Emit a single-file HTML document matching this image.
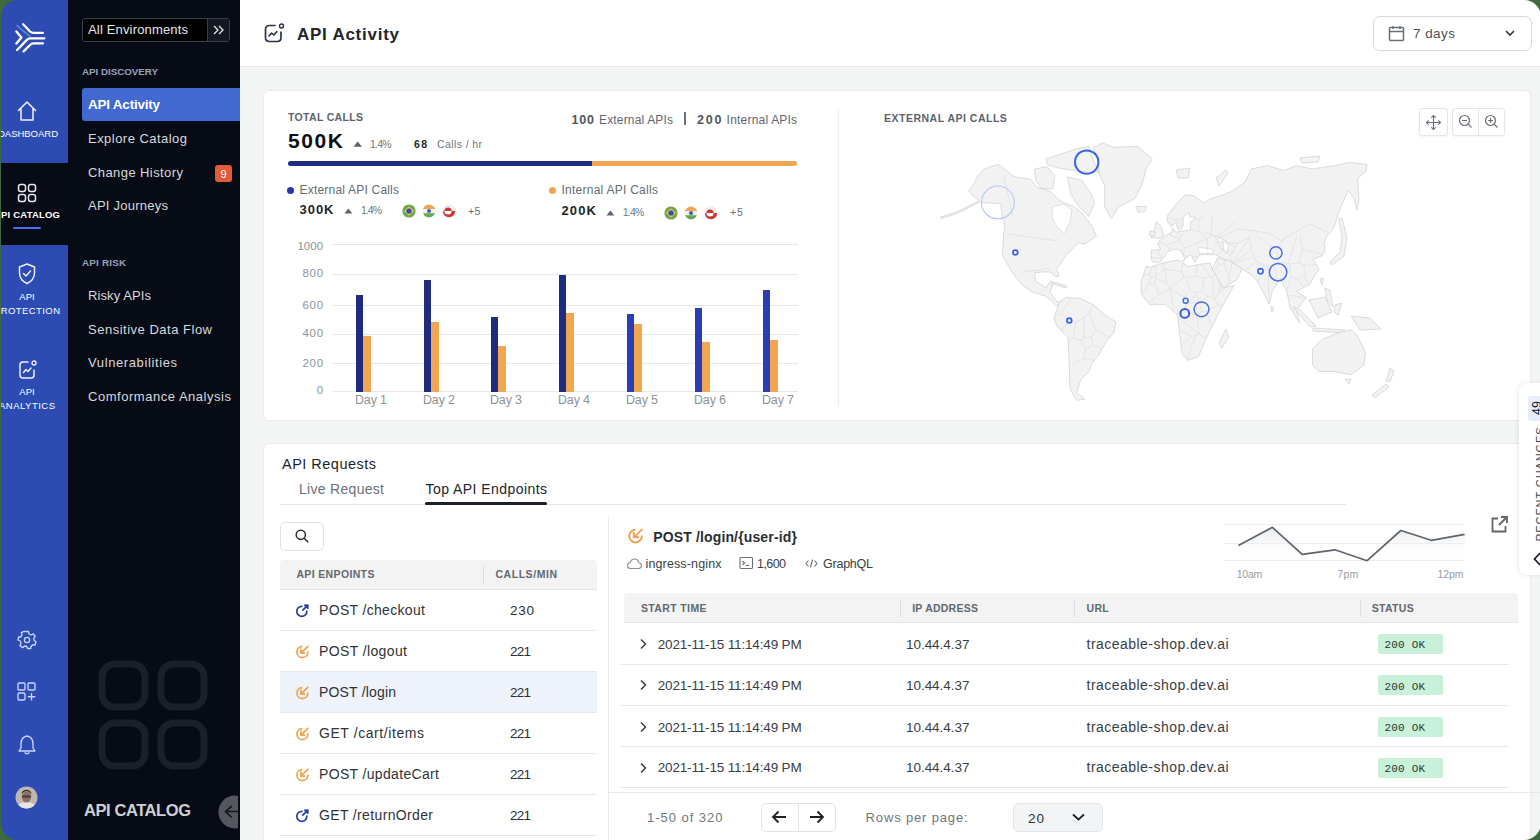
<!DOCTYPE html>
<html><head><meta charset="utf-8"><title>API Activity</title>
<style>
html,body{margin:0;padding:0}
body{width:1540px;height:840px;overflow:hidden;background:#3e6a40;position:relative;font-family:"Liberation Sans",sans-serif}
#app{position:absolute;left:0;top:0;width:1540px;height:840px;overflow:hidden;background:#f3f4f4}
.t{position:absolute;white-space:nowrap;line-height:1}
.r{position:absolute;box-sizing:border-box}
.s{position:absolute;overflow:visible}
</style></head><body><div id="app">
<div class="r" style="left:240px;top:0px;width:1300px;height:66px;background:#fff"></div>
<div class="r" style="left:240px;top:66px;width:1300px;height:1px;background:#e6e8ea"></div>
<div class="r" style="left:0px;top:0px;width:68px;height:840px;background:#2c4cb4"></div>
<div class="r" style="left:0px;top:163px;width:68px;height:82px;background:#070b15"></div>
<svg class="s" style="left:14px;top:22px;" width="32" height="32" viewBox="0 0 32 32"><g fill="none" stroke="#fff" stroke-width="2.3" stroke-linecap="round" stroke-linejoin="round">
<path d="M3.1 3.7 L16 14.4" stroke="#7fa4f5" stroke-width="2" opacity=".55"/>
<path d="M9.2 2.3 L16 9.5 Q17.4 10.9 19.5 10.9 L28.9 10.9"/>
<path d="M2.4 9.4 L7.4 15.5 L2.4 21.6"/>
<path d="M3.1 28 L13.1 17.6 Q14.3 16.3 16.5 16.3 L30.3 16.3"/>
<path d="M9.6 29.4 L16 23 Q17.4 21.4 19.5 21.4 L28.9 21.4"/>
</g></svg>
<svg class="s" style="left:17px;top:100px;" width="20" height="22" viewBox="0 0 20 22"><path d="M1.5 10.5 L10 2 L18.5 10.5 M4 8.5 V20 H16 V8.5" fill="none" stroke="#eef1fa" stroke-width="1.5" stroke-linejoin="round" stroke-linecap="round"/></svg>
<div class="t" style="left:-2.00px;top:129.00px;font-size:9.5px;color:#fff;font-weight:400;letter-spacing:-0.022px;">DASHBOARD</div>
<svg class="s" style="left:17px;top:183px;" width="21" height="20" viewBox="0 0 21 20"><g fill="none" stroke="#e8e8ee" stroke-width="1.5"><rect x="1.5" y="1.5" width="7" height="7" rx="2.2"/><rect x="11.5" y="1.5" width="7" height="7" rx="2.2"/><rect x="1.5" y="11.5" width="7" height="7" rx="2.2"/><rect x="11.5" y="11.5" width="7" height="7" rx="2.2"/></g></svg>
<div class="t" style="left:-6.00px;top:210.00px;font-size:9.5px;color:#fff;font-weight:700;letter-spacing:0.197px;">API CATALOG</div>
<div class="r" style="left:13px;top:227px;width:28px;height:2px;background:#4a6cf0;border-radius:1px"></div>
<svg class="s" style="left:17px;top:262px;" width="20" height="23" viewBox="0 0 20 23"><path d="M10 2 L17.5 5 V11 Q17.5 18 10 21.5 Q2.5 18 2.5 11 V5 Z" fill="none" stroke="#eef1fa" stroke-width="1.45" stroke-linejoin="round"/><path d="M6.5 11.5 L9 14 L13.5 9" fill="none" stroke="#eef1fa" stroke-width="1.45" stroke-linecap="round" stroke-linejoin="round"/></svg>
<div class="t" style="left:19.34px;top:292.00px;font-size:9.5px;color:#fff;font-weight:400;">API</div>
<div class="t" style="left:-6.00px;top:306.00px;font-size:9.5px;color:#fff;font-weight:400;letter-spacing:0.413px;">PROTECTION</div>
<svg class="s" style="left:17px;top:359px;" width="21" height="21" viewBox="0 0 21 21"><path d="M11 3 H6 Q3 3 3 6 V16 Q3 19 6 19 H14 Q17 19 17 16 V11" fill="none" stroke="#eef1fa" stroke-width="1.45" stroke-linecap="round"/><circle cx="17" cy="4" r="2" fill="none" stroke="#eef1fa" stroke-width="1.3"/><path d="M6.5 13.5 L9 10.5 L11 12.5 L14 9" fill="none" stroke="#eef1fa" stroke-width="1.4" stroke-linecap="round" stroke-linejoin="round"/></svg>
<div class="t" style="left:19.34px;top:387.00px;font-size:9.5px;color:#fff;font-weight:400;">API</div>
<div class="t" style="left:-1.00px;top:401.00px;font-size:9.5px;color:#fff;font-weight:400;letter-spacing:0.489px;">ANALYTICS</div>
<svg class="s" style="left:17px;top:630px;" width="20" height="20" viewBox="0 0 20 20"><g fill="none" stroke="#c9d4f7" stroke-width="1.35"><path d="M8.5 1.5 H11.5 L12 4 L14 5 L16.3 3.9 L18.2 6.2 L16.8 8.3 L17.2 10.5 L19 12 L18 15 L15.6 14.8 L14 16.5 L13.8 18.5 H10.5 L9.8 16.5 L7.6 16 L5.6 17.6 L3 15.6 L4 13.3 L3.4 11 L1 10 L1.6 7 L4 7 L5 4.8 L4.3 2.6 L7 1.3 Z" stroke-linejoin="round"/><circle cx="10" cy="10" r="2.6"/></g></svg>
<svg class="s" style="left:17px;top:682px;" width="20" height="20" viewBox="0 0 20 20"><g fill="none" stroke="#c9d4f7" stroke-width="1.35"><rect x="1" y="1" width="7" height="7" rx="1.2"/><rect x="11" y="1" width="7" height="7" rx="1.2"/><rect x="1" y="11" width="7" height="7" rx="1.2"/><path d="M14.5 11 V18.5 M10.8 14.7 H18.3"/></g></svg>
<svg class="s" style="left:17px;top:734px;" width="20" height="22" viewBox="0 0 20 22"><path d="M10 2 Q4 3 4 10 V14 L2 17 H18 L16 14 V10 Q16 3 10 2 Z M7.5 18.5 Q10 21 12.5 18.5" fill="none" stroke="#c9d4f7" stroke-width="1.35" stroke-linejoin="round"/></svg>
<svg class="s" style="left:15px;top:786px;" width="23" height="23" viewBox="0 0 23 23"><defs><clipPath id="av"><circle cx="11.5" cy="11.5" r="11"/></clipPath></defs>
<circle cx="11.5" cy="11.5" r="11" fill="#bfb6b0"/>
<g clip-path="url(#av)"><ellipse cx="11.5" cy="22" rx="10" ry="6" fill="#e9e4df"/><ellipse cx="11.5" cy="11" rx="4.6" ry="5.6" fill="#8a6f62"/><path d="M6.5 8 Q11.5 2 16.5 8 L16 6 Q11.5 1.5 7 6 Z" fill="#2b2523"/><rect x="7" y="9.5" width="9" height="2" fill="#2e2a2a" opacity=".7"/></g></svg>
<div class="r" style="left:68px;top:0px;width:172px;height:840px;background:#070b15"></div>
<div class="r" style="left:82px;top:18px;width:148px;height:24px;background:#000;border:1px solid #3a3f4a;border-radius:3px"></div>
<div class="r" style="left:207px;top:19px;width:1px;height:22px;background:#3a3f4a"></div>
<div class="r" style="left:208px;top:19px;width:21px;height:22px;background:#141820"></div>
<div class="t" style="left:88.00px;top:23.00px;font-size:13px;color:#e6e6e6;font-weight:400;letter-spacing:0.164px;">All Environments</div>
<svg class="s" style="left:211px;top:24px;" width="16" height="12" viewBox="0 0 16 12"><path d="M3 2 L7 6 L3 10 M8 2 L12 6 L8 10" fill="none" stroke="#e6e6e6" stroke-width="1.3"/></svg>
<div class="t" style="left:82.00px;top:67.00px;font-size:9.8px;color:#98a2bd;font-weight:700;letter-spacing:-0.035px;">API DISCOVERY</div>
<div class="r" style="left:82px;top:88px;width:158px;height:33px;background:#4169d1;border-radius:3px 0 0 3px"></div>
<div class="t" style="left:88.00px;top:98.00px;font-size:13.5px;color:#fff;font-weight:700;letter-spacing:-0.229px;">API Activity</div>
<div class="t" style="left:88.00px;top:132.00px;font-size:13px;color:#d9d9de;font-weight:400;letter-spacing:0.464px;">Explore Catalog</div>
<div class="t" style="left:88.00px;top:166.00px;font-size:13px;color:#d9d9de;font-weight:400;letter-spacing:0.415px;">Change History</div>
<div class="r" style="left:215px;top:165px;width:17px;height:17px;background:#e45b3a;border-radius:3px"></div>
<div class="t" style="left:220.44px;top:169.00px;font-size:11px;color:#fff;font-weight:400;">9</div>
<div class="t" style="left:88.00px;top:199.00px;font-size:13px;color:#d9d9de;font-weight:400;letter-spacing:0.244px;">API Journeys</div>
<div class="t" style="left:82.00px;top:258.00px;font-size:9.8px;color:#98a2bd;font-weight:700;letter-spacing:0.218px;">API RISK</div>
<div class="t" style="left:88.00px;top:289.00px;font-size:13px;color:#d9d9de;font-weight:400;letter-spacing:0.097px;">Risky APIs</div>
<div class="t" style="left:88.00px;top:323.00px;font-size:13px;color:#d9d9de;font-weight:400;letter-spacing:0.507px;">Sensitive Data Flow</div>
<div class="t" style="left:88.00px;top:356.00px;font-size:13px;color:#d9d9de;font-weight:400;letter-spacing:0.610px;">Vulnerabilities</div>
<div class="t" style="left:88.00px;top:390.00px;font-size:13px;color:#d9d9de;font-weight:400;letter-spacing:0.529px;">Comformance Analysis</div>
<svg class="s" style="left:98px;top:660px;" width="112" height="112" viewBox="0 0 112 112"><g fill="none" stroke="#1b1f28" stroke-width="7"><rect x="4" y="4" width="43" height="43" rx="13"/><rect x="63" y="4" width="43" height="43" rx="13"/><rect x="4" y="63" width="43" height="43" rx="13"/><rect x="63" y="63" width="43" height="43" rx="13"/></g></svg>
<div class="t" style="left:84.00px;top:802.00px;font-size:16.5px;color:#cfcfd3;font-weight:700;letter-spacing:-0.422px;">API CATALOG</div>
<div style="position:absolute;left:218px;top:795px;width:20px;height:34px;overflow:hidden">
<svg class="s" style="left:0px;top:0px;" width="34" height="34" viewBox="0 0 34 34"><circle cx="16.8" cy="17" r="16.4" fill="#54575e"/><path d="M20 16.5 H7.5 M13.8 11 L7.5 16.5 L13.8 22.5" fill="none" stroke="#15181e" stroke-width="1.7"/></svg>
</div>
<svg class="s" style="left:263px;top:23px;" width="22" height="21" viewBox="0 0 22 21"><path d="M12 2.5 H6.5 Q2.5 2.5 2.5 6.5 V14.5 Q2.5 18.5 6.5 18.5 H14 Q18 18.5 18 14.5 V9" fill="none" stroke="#2a3046" stroke-width="1.7" stroke-linecap="round"/><circle cx="18.5" cy="3" r="2" fill="none" stroke="#2a3046" stroke-width="1.4"/><path d="M6 13 L8.6 10 L10.8 12 L14 8.5" fill="none" stroke="#2a3046" stroke-width="1.6" stroke-linecap="round" stroke-linejoin="round"/></svg>
<div class="t" style="left:297.00px;top:26.00px;font-size:17px;color:#22252d;font-weight:700;letter-spacing:0.742px;">API Activity</div>
<div class="r" style="left:1373px;top:16px;width:159px;height:35px;background:#fff;border:1px solid #d5d8dc;border-radius:7px"></div>
<svg class="s" style="left:1388px;top:25px;" width="17" height="17" viewBox="0 0 17 17"><g fill="none" stroke="#6a6f78" stroke-width="1.5"><rect x="1.5" y="2.5" width="14" height="13" rx="1"/><path d="M1.5 6.5 H15.5 M5 1 V4 M12 1 V4"/></g></svg>
<div class="t" style="left:1413.00px;top:27.00px;font-size:13.5px;color:#4c5159;font-weight:400;letter-spacing:0.445px;">7 days</div>
<svg class="s" style="left:1504px;top:29px;" width="12" height="9" viewBox="0 0 12 9"><path d="M2 2 L6 6 L10 2" fill="none" stroke="#30343b" stroke-width="1.6"/></svg>
<div class="r" style="left:263px;top:90px;width:1268px;height:331px;background:#fff;border:1px solid #e9eaec;border-radius:6px"></div>
<div class="t" style="left:288.00px;top:112.00px;font-size:10.5px;color:#5c636c;font-weight:700;letter-spacing:0.325px;">TOTAL CALLS</div>
<div class="t" style="left:288.00px;top:130.00px;font-size:21px;color:#0d0f14;font-weight:700;letter-spacing:1.598px;">500K</div>
<svg class="s" style="left:353px;top:141px;" width="10" height="6" viewBox="0 0 10 6"><path d="M0.5 5.8 L4.7 0.5 L9 5.8 Z" fill="#5c636c"/></svg>
<div class="t" style="left:370.00px;top:139.00px;font-size:10.5px;color:#70767e;font-weight:400;letter-spacing:-0.811px;">1.4%</div>
<div class="t" style="left:414.00px;top:139.00px;font-size:10.5px;color:#262a31;font-weight:700;letter-spacing:1.320px;">68</div>
<div class="t" style="left:437.00px;top:139.00px;font-size:10.5px;color:#70767e;font-weight:400;letter-spacing:0.397px;">Calls / hr</div>
<div class="t" style="left:571.50px;top:114.00px;font-size:12.5px;color:#50565e;font-weight:700;letter-spacing:0.822px;">100</div>
<div class="t" style="left:599.00px;top:114.00px;font-size:12px;color:#5f656d;font-weight:400;letter-spacing:0.164px;">External APIs</div>
<div class="r" style="left:684px;top:112px;width:1.5px;height:13px;background:#6a7078"></div>
<div class="t" style="left:697.00px;top:114.00px;font-size:12.5px;color:#50565e;font-weight:700;letter-spacing:1.822px;">200</div>
<div class="t" style="left:726.60px;top:114.00px;font-size:12px;color:#5f656d;font-weight:400;letter-spacing:0.205px;">Internal APIs</div>
<div class="r" style="left:288px;top:161px;width:306px;height:4.5px;background:#1f2d80;border-radius:3px 0 0 3px"></div>
<div class="r" style="left:592px;top:161px;width:205px;height:4.5px;background:#f2a652;border-radius:0 3px 3px 0"></div>
<div class="r" style="left:287px;top:187px;width:7px;height:7px;background:#2336b0;border-radius:50%"></div>
<div class="t" style="left:299.50px;top:184.00px;font-size:12px;color:#666c74;font-weight:400;letter-spacing:0.203px;">External API Calls</div>
<div class="t" style="left:299.50px;top:203.00px;font-size:13px;color:#22262d;font-weight:700;letter-spacing:0.974px;">300K</div>
<svg class="s" style="left:344px;top:208px;" width="9" height="6" viewBox="0 0 9 6"><path d="M0.5 5.5 L4.3 0.5 L8.3 5.5 Z" fill="#5c636c"/></svg>
<div class="t" style="left:361.00px;top:205.00px;font-size:10.5px;color:#70767e;font-weight:400;letter-spacing:-0.978px;">1.4%</div>
<div class="r" style="left:549px;top:187px;width:7px;height:7px;background:#f2a652;border-radius:50%"></div>
<div class="t" style="left:561.40px;top:184.00px;font-size:12px;color:#666c74;font-weight:400;letter-spacing:0.262px;">Internal API Calls</div>
<div class="t" style="left:561.40px;top:204.00px;font-size:13px;color:#22262d;font-weight:700;letter-spacing:1.140px;">200K</div>
<svg class="s" style="left:606px;top:210px;" width="9" height="6" viewBox="0 0 9 6"><path d="M0.5 5.5 L4.3 0.5 L8.3 5.5 Z" fill="#5c636c"/></svg>
<div class="t" style="left:622.80px;top:207.00px;font-size:10.5px;color:#70767e;font-weight:400;letter-spacing:-0.811px;">1.4%</div>
<svg class="s" style="left:402px;top:203.5px;" width="14" height="14" viewBox="0 0 14 14"><circle cx="7" cy="7" r="6.6" fill="#6aa84f"/><path d="M7 2.2 L12.2 7 L7 11.8 L1.8 7 Z" fill="#f2b84b"/><circle cx="7" cy="7" r="2.6" fill="#2a4fbf"/></svg>
<svg class="s" style="left:422px;top:203.5px;" width="14" height="14" viewBox="0 0 14 14"><defs><clipPath id="in409"><circle cx="7" cy="7" r="6.4"/></clipPath></defs><g clip-path="url(#in409)"><rect width="14" height="5" fill="#f4a64e"/><rect y="5" width="14" height="4.2" fill="#f0f0f0"/><rect y="9.2" width="14" height="5" fill="#6aa84f"/></g><circle cx="7" cy="7" r="2" fill="#3a5fc8"/></svg>
<svg class="s" style="left:442px;top:203.5px;" width="14" height="14" viewBox="0 0 14 14"><circle cx="7" cy="7" r="6.8" fill="#eeeeee"/><defs><clipPath id="gl409"><circle cx="7" cy="7.3" r="6"/></clipPath></defs><g clip-path="url(#gl409)"><rect y="7" width="14" height="7" fill="#d0342c"/><circle cx="6" cy="7" r="3.6" fill="#d0342c"/><path d="M2.4 7 A3.6 3.6 0 0 0 9.6 7 Z" fill="#fff"/></g></svg>
<div class="t" style="left:468.00px;top:206.00px;font-size:10.7px;color:#6a7078;font-weight:400;letter-spacing:0.300px;">+5</div>
<svg class="s" style="left:664px;top:205.5px;" width="14" height="14" viewBox="0 0 14 14"><circle cx="7" cy="7" r="6.6" fill="#6aa84f"/><path d="M7 2.2 L12.2 7 L7 11.8 L1.8 7 Z" fill="#f2b84b"/><circle cx="7" cy="7" r="2.6" fill="#2a4fbf"/></svg>
<svg class="s" style="left:684px;top:205.5px;" width="14" height="14" viewBox="0 0 14 14"><defs><clipPath id="in671"><circle cx="7" cy="7" r="6.4"/></clipPath></defs><g clip-path="url(#in671)"><rect width="14" height="5" fill="#f4a64e"/><rect y="5" width="14" height="4.2" fill="#f0f0f0"/><rect y="9.2" width="14" height="5" fill="#6aa84f"/></g><circle cx="7" cy="7" r="2" fill="#3a5fc8"/></svg>
<svg class="s" style="left:704px;top:205.5px;" width="14" height="14" viewBox="0 0 14 14"><circle cx="7" cy="7" r="6.8" fill="#eeeeee"/><defs><clipPath id="gl671"><circle cx="7" cy="7.3" r="6"/></clipPath></defs><g clip-path="url(#gl671)"><rect y="7" width="14" height="7" fill="#d0342c"/><circle cx="6" cy="7" r="3.6" fill="#d0342c"/><path d="M2.4 7 A3.6 3.6 0 0 0 9.6 7 Z" fill="#fff"/></g></svg>
<div class="t" style="left:730.00px;top:207.00px;font-size:10.7px;color:#6a7078;font-weight:400;letter-spacing:0.800px;">+5</div>
<div class="r" style="left:332px;top:244px;width:466px;height:1px;background:#e7e8ea"></div>
<div class="t" style="left:297.40px;top:241.00px;font-size:11.5px;color:#8d9299;font-weight:400;letter-spacing:0.072px;">1000</div>
<div class="r" style="left:332px;top:274px;width:466px;height:1px;background:#e7e8ea"></div>
<div class="t" style="left:302.40px;top:268.00px;font-size:11.5px;color:#8d9299;font-weight:400;letter-spacing:0.806px;">800</div>
<div class="r" style="left:332px;top:305px;width:466px;height:1px;background:#e7e8ea"></div>
<div class="t" style="left:302.40px;top:300.00px;font-size:11.5px;color:#8d9299;font-weight:400;letter-spacing:0.806px;">600</div>
<div class="r" style="left:332px;top:334px;width:466px;height:1px;background:#e7e8ea"></div>
<div class="t" style="left:302.40px;top:328.00px;font-size:11.5px;color:#8d9299;font-weight:400;letter-spacing:0.806px;">400</div>
<div class="r" style="left:332px;top:363px;width:466px;height:1px;background:#e7e8ea"></div>
<div class="t" style="left:302.40px;top:358.00px;font-size:11.5px;color:#8d9299;font-weight:400;letter-spacing:0.806px;">200</div>
<div class="r" style="left:332px;top:391px;width:466px;height:1px;background:#e7e8ea"></div>
<div class="t" style="left:316.80px;top:385.00px;font-size:11.5px;color:#8d9299;font-weight:400;">0</div>
<div class="r" style="left:356px;top:295px;width:7px;height:96.5px;background:#1f2b7d"></div>
<div class="r" style="left:363px;top:336px;width:8px;height:55.5px;background:#f2a652"></div>
<div class="t" style="left:355.00px;top:394.00px;font-size:12.5px;color:#8d9299;font-weight:400;letter-spacing:-0.164px;">Day 1</div>
<div class="r" style="left:424px;top:280px;width:7px;height:111.5px;background:#1f2b7d"></div>
<div class="r" style="left:431px;top:322px;width:8px;height:69.5px;background:#f2a652"></div>
<div class="t" style="left:423.00px;top:394.00px;font-size:12.5px;color:#8d9299;font-weight:400;letter-spacing:-0.164px;">Day 2</div>
<div class="r" style="left:491px;top:317px;width:7px;height:74.5px;background:#1f2b7d"></div>
<div class="r" style="left:498px;top:346px;width:8px;height:45.5px;background:#f2a652"></div>
<div class="t" style="left:490.00px;top:394.00px;font-size:12.5px;color:#8d9299;font-weight:400;letter-spacing:-0.164px;">Day 3</div>
<div class="r" style="left:559px;top:275px;width:7px;height:116.5px;background:#1f2b7d"></div>
<div class="r" style="left:566px;top:313px;width:8px;height:78.5px;background:#f2a652"></div>
<div class="t" style="left:558.00px;top:394.00px;font-size:12.5px;color:#8d9299;font-weight:400;letter-spacing:-0.164px;">Day 4</div>
<div class="r" style="left:627px;top:314px;width:7px;height:77.5px;background:#2b3db0"></div>
<div class="r" style="left:634px;top:324px;width:8px;height:67.5px;background:#f2a652"></div>
<div class="t" style="left:626.00px;top:394.00px;font-size:12.5px;color:#8d9299;font-weight:400;letter-spacing:-0.164px;">Day 5</div>
<div class="r" style="left:695px;top:308px;width:7px;height:83.5px;background:#2b3db0"></div>
<div class="r" style="left:702px;top:342px;width:8px;height:49.5px;background:#f2a652"></div>
<div class="t" style="left:694.00px;top:394.00px;font-size:12.5px;color:#8d9299;font-weight:400;letter-spacing:-0.164px;">Day 6</div>
<div class="r" style="left:763px;top:290px;width:7px;height:101.5px;background:#2b3db0"></div>
<div class="r" style="left:770px;top:340px;width:8px;height:51.5px;background:#f2a652"></div>
<div class="t" style="left:762.00px;top:394.00px;font-size:12.5px;color:#8d9299;font-weight:400;letter-spacing:-0.164px;">Day 7</div>
<div class="r" style="left:838px;top:110px;width:1px;height:296px;background:#eceef0"></div>
<div class="t" style="left:884.00px;top:113.00px;font-size:10.5px;color:#5c636c;font-weight:700;letter-spacing:0.497px;">EXTERNAL API CALLS</div>
<div class="r" style="left:1419px;top:108px;width:29px;height:28px;background:#fff;border:1px solid #e4e6e9;border-radius:3px;box-shadow:0 1px 2px rgba(0,0,0,.05)"></div>
<div class="r" style="left:1452px;top:108px;width:53px;height:28px;background:#fff;border:1px solid #e4e6e9;border-radius:3px;box-shadow:0 1px 2px rgba(0,0,0,.05)"></div>
<div class="r" style="left:1478px;top:109px;width:1px;height:26px;background:#e4e6e9"></div>
<svg class="s" style="left:1425px;top:114px;" width="17" height="17" viewBox="0 0 17 17"><path d="M8.5 1.5 V15.5 M1.5 8.5 H15.5 M6.3 3.7 L8.5 1.5 L10.7 3.7 M6.3 13.3 L8.5 15.5 L10.7 13.3 M3.7 6.3 L1.5 8.5 L3.7 10.7 M13.3 6.3 L15.5 8.5 L13.3 10.7" fill="none" stroke="#6a7078" stroke-width="1.1"/></svg>
<svg class="s" style="left:1458px;top:114px;" width="15" height="15" viewBox="0 0 15 15"><circle cx="6.5" cy="6.5" r="5" fill="none" stroke="#6a7078" stroke-width="1.2"/><path d="M4 6.5 H9 M10.2 10.2 L13.5 13.5" fill="none" stroke="#6a7078" stroke-width="1.2"/></svg>
<svg class="s" style="left:1484px;top:114px;" width="15" height="15" viewBox="0 0 15 15"><circle cx="6.5" cy="6.5" r="5" fill="none" stroke="#6a7078" stroke-width="1.2"/><path d="M4 6.5 H9 M6.5 4 V9 M10.2 10.2 L13.5 13.5" fill="none" stroke="#6a7078" stroke-width="1.2"/></svg>
<svg class="s" style="left:930px;top:130px;" width="500" height="290" viewBox="0 0 500 290"><g fill="#f2f2f3" stroke="#d1d3d6" stroke-width="0.8" stroke-linejoin="round"><path d="M10.7 87.1 L26.4 82.1 L40.7 75.0 L49.3 70.7 L42.1 65.0 L38.6 61.4 L45.0 52.1 L46.4 47.9 L53.6 39.3 L67.9 34.3 L73.6 37.9 L83.6 46.4 L90.7 47.9 L100.0 49.1 L106.8 57.0 L120.4 61.6 L127.1 68.3 L133.9 72.9 L140.0 75.0 L145.0 77.4 L153.2 84.2 L158.8 92.0 L163.0 98.0 L166.4 106.0 L155.0 114.0 L148.5 112.8 L135.7 125.7 L129.0 136.0 L126.0 138.5 L129.2 146.0 L126.0 147.0 L120.0 142.0 L114.2 141.8 L104.6 142.8 L105.7 151.4 L116.4 157.8 L118.5 153.5 L123.0 154.0 L120.0 162.0 L127.1 172.0 L133.5 170.7 L127.0 176.0 L116.4 166.4 L102.5 162.1 L92.8 155.7 L82.0 142.0 L72.5 125.7 L73.6 104.3 L75.0 96.4 L72.1 85.0 L70.7 73.6 L60.0 73.0 L49.3 72.5 L40.0 77.0 L26.0 84.0 L11.0 88.5 Z"/><path d="M104.5 39.0 L117.0 36.7 L124.9 45.7 L122.6 59.3 L111.3 58.2 L105.7 50.2 Z"/><path d="M137.3 46.9 L152.0 50.2 L161.1 63.8 L164.5 72.9 L158.8 86.4 L148.6 76.3 L140.7 63.8 Z"/><path d="M115.8 28.8 L133.9 23.1 L147.5 18.6 L158.8 16.3 L163.3 31.0 L169.0 42.3 L155.0 42.0 L140.0 40.0 L128.0 38.0 L118.0 35.0 Z"/><path d="M163.0 18.0 L172.4 12.9 L183.7 17.4 L207.5 16.3 L222.2 28.8 L216.5 37.8 L212.0 54.8 L205.2 68.3 L188.2 77.4 L181.4 88.7 L174.7 77.4 L174.7 55.9 L169.0 43.5 L167.9 27.6 Z"/><path d="M129.2 172.8 L135.7 167.5 L150.7 168.5 L163.5 174.9 L176.3 185.7 L186.0 192.0 L183.8 202.8 L176.3 211.3 L167.8 226.3 L161.4 233.8 L159.2 241.3 L150.7 250.0 L146.4 262.7 L155.0 269.2 L146.4 270.2 L140.0 258.5 L138.9 228.5 L137.8 207.1 L127.1 196.4 L123.9 187.8 L127.1 179.2 Z"/><path d="M221.1 120.4 L221.1 129.0 L223.2 132.2 L229.7 132.2 L232.9 129.0 L237.2 122.5 L242.5 119.3 L247.9 119.3 L251.1 121.5 L255.4 129.0 L252.2 131.1 L256.0 128.0 L260.7 124.7 L265.0 132.2 L269.3 124.7 L285.4 124.7 L289.7 127.0 L298.6 130.5 L312.3 138.8 L321.4 145.0 L327.9 151.5 L339.1 174.0 L342.3 161.1 L350.4 148.3 L356.8 161.1 L360.0 177.2 L369.7 193.3 L366.5 180.4 L376.1 167.6 L366.5 161.1 L379.3 154.7 L389.0 138.6 L382.5 129.0 L392.2 125.8 L395.0 120.0 L394.0 113.0 L397.0 106.0 L404.0 98.0 L408.0 84.0 L414.0 70.0 L418.0 60.5 L424.0 68.0 L427.0 80.0 L429.0 70.0 L427.6 48.6 L436.0 41.4 L437.0 34.3 L417.9 32.5 L405.0 35.7 L382.5 38.9 L366.5 35.7 L353.6 40.5 L337.5 35.7 L321.4 38.9 L315.0 51.8 L302.2 61.4 L296.0 63.6 L290.7 65.7 L280.0 69.0 L273.6 73.2 L264.0 65.7 L255.4 64.6 L246.8 73.2 L237.2 86.1 L237.2 91.4 L241.4 96.8 L245.7 92.0 L248.0 99.0 L250.0 100.0 L253.2 95.7 L253.2 87.2 L258.6 83.0 L260.0 87.0 L266.0 87.2 L260.7 92.0 L260.7 100.0 L253.0 101.0 L245.7 102.2 L242.5 98.0 L242.0 102.0 L236.1 105.4 L230.7 109.7 L227.5 112.9 L230.7 119.3 Z"/><path d="M216.4 136.0 L211.0 152.5 L211.0 163.4 L219.2 174.4 L235.6 174.4 L247.9 185.3 L249.3 201.8 L252.0 223.7 L257.5 230.5 L268.5 226.4 L276.7 207.3 L282.2 196.3 L290.4 179.9 L304.1 155.2 L293.2 158.0 L282.2 138.8 L280.0 133.2 L269.3 134.3 L258.6 136.5 L247.9 130.0 L231.8 133.2 L220.0 137.5 Z"/><path d="M282.2 138.8 L293.2 158.0 L306.8 149.7 L312.3 138.8 L298.6 130.5 L287.7 127.8 Z"/><path d="M226.4 91.4 L230.7 95.7 L233.9 105.4 L229.7 108.6 L221.1 107.5 L224.3 100.0 Z"/><path d="M220.0 101.1 L225.4 102.2 L223.2 106.4 L219.5 105.4 Z"/><path d="M206.0 76.4 L216.8 76.4 L214.6 81.8 L208.2 82.3 Z"/><path d="M295.9 199.0 L298.6 207.3 L291.8 218.2 L289.0 212.7 Z"/><path d="M408.6 89.0 L412.0 88.0 L417.0 108.0 L414.0 126.0 L402.0 135.0 L400.0 132.0 L410.0 122.0 L412.0 108.0 Z"/><path d="M363.0 177.0 L370.0 180.0 L386.0 196.0 L380.0 197.0 Z"/><path d="M379.0 170.0 L395.0 167.0 L402.0 182.0 L388.0 188.0 Z"/><path d="M405.0 175.0 L412.0 173.0 L408.0 185.0 L404.0 182.0 Z"/><path d="M383.0 198.0 L415.0 200.0 L415.0 203.0 L383.0 201.0 Z"/><path d="M421.0 186.0 L440.0 188.0 L451.0 199.0 L430.0 200.0 Z"/><path d="M395.0 158.0 L400.0 160.0 L403.0 177.0 L397.0 170.0 Z"/><path d="M390.0 149.0 L393.0 148.0 L392.0 155.0 Z"/><path d="M341.0 176.0 L344.0 178.0 L342.0 182.0 Z"/><path d="M382.5 219.0 L392.2 209.4 L408.3 202.9 L421.1 199.7 L427.6 206.1 L435.6 222.2 L434.0 235.1 L421.1 244.7 L405.0 241.5 L389.0 241.5 L382.5 235.1 Z"/><path d="M415.0 249.0 L421.0 249.0 L419.0 254.0 Z"/><path d="M460.0 238.0 L464.0 241.0 L460.0 252.0 L456.0 251.0 Z"/><path d="M456.0 254.0 L459.0 257.0 L445.0 268.0 L442.0 265.0 Z"/><path d="M120.0 151.0 L137.0 156.0 L136.0 158.0 L121.0 153.0 Z"/><path d="M246.0 40.0 L260.0 38.0 L258.0 48.0 L248.0 48.0 Z"/><path d="M286.0 48.0 L296.0 40.0 L298.0 43.0 L289.0 56.0 Z"/><path d="M370.0 28.0 L390.0 26.0 L388.0 32.0 L372.0 33.0 Z"/></g><g fill="#fff" stroke="#d3d5d8" stroke-width="0.7"><path d="M122.6 77.0 L133.0 74.0 L142.0 80.0 L140.0 92.0 L134.3 103.6 L128.0 98.0 L122.0 88.0 Z"/><path d="M268.2 117.2 L283.2 119.3 L282.2 123.6 L269.3 123.6 Z"/><path d="M292.9 108.6 L298.2 115.0 L297.2 123.6 L294.0 121.5 Z"/></g><g fill="none" stroke="#d8dadd" stroke-width="0.6"><path d="M215.6 138.4 L219.4 137.3"/><path d="M213.6 144.6 L219.2 145.1"/><path d="M222.5 136.6 L219.2 145.1"/><path d="M260.0 160.0 L253.9 167.1"/><path d="M240.5 159.5 L253.9 167.1"/><path d="M239.8 158.6 L240.5 159.5"/><path d="M256.4 147.8 L260.0 160.0"/><path d="M256.4 147.8 L254.2 147.0"/><path d="M239.8 158.6 L254.2 147.0"/><path d="M251.0 215.3 L261.5 206.4"/><path d="M249.1 199.5 L261.5 206.4"/><path d="M239.8 158.6 L228.9 164.2"/><path d="M218.2 173.0 L228.9 164.2"/><path d="M240.5 159.5 L243.9 181.8"/><path d="M256.9 229.7 L265.7 205.5"/><path d="M261.5 206.4 L265.7 205.5"/><path d="M296.6 157.1 L288.7 162.3"/><path d="M290.1 152.7 L288.7 162.3"/><path d="M280.6 146.3 L274.2 148.5"/><path d="M280.6 146.3 L271.0 134.1"/><path d="M274.2 148.5 L265.9 146.0"/><path d="M267.0 134.8 L265.9 146.0"/><path d="M285.4 144.3 L282.7 145.9"/><path d="M282.7 145.9 L280.6 146.3"/><path d="M252.5 132.8 L252.0 141.8"/><path d="M256.4 147.8 L265.9 146.0"/><path d="M252.0 141.8 L254.2 147.0"/><path d="M260.0 160.0 L266.0 162.8"/><path d="M274.2 148.5 L271.9 160.4"/><path d="M271.9 160.4 L266.0 162.8"/><path d="M212.0 164.8 L218.7 154.5"/><path d="M228.9 164.2 L224.9 153.2"/><path d="M224.9 153.2 L218.7 154.5"/><path d="M219.2 145.1 L221.0 146.7"/><path d="M221.0 146.7 L218.7 154.5"/><path d="M236.6 153.1 L235.1 139.2"/><path d="M236.6 153.1 L225.8 148.4"/><path d="M225.8 148.4 L225.0 147.4"/><path d="M234.8 138.8 L225.7 146.4"/><path d="M225.7 146.4 L225.0 147.4"/><path d="M239.8 158.6 L236.6 153.1"/><path d="M252.0 141.8 L235.1 139.2"/><path d="M224.9 153.2 L225.8 148.4"/><path d="M221.0 146.7 L225.0 147.4"/><path d="M232.4 133.1 L234.8 138.8"/><path d="M225.3 135.6 L225.7 146.4"/><path d="M253.7 180.9 L246.9 184.4"/><path d="M253.7 180.9 L266.6 185.7"/><path d="M248.0 187.0 L269.2 204.4"/><path d="M266.6 185.7 L269.2 204.4"/><path d="M255.7 174.5 L253.9 167.1"/><path d="M255.7 174.5 L253.7 180.9"/><path d="M265.7 205.5 L269.2 204.4"/><path d="M276.5 207.8 L269.2 204.4"/><path d="M255.7 174.5 L258.9 173.1"/><path d="M266.0 162.8 L265.9 164.5"/><path d="M258.9 173.1 L265.9 164.5"/><path d="M277.9 166.4 L269.2 172.4"/><path d="M277.9 166.4 L283.6 168.2"/><path d="M284.7 169.2 L283.6 168.2"/><path d="M284.7 169.2 L288.3 174.9"/><path d="M288.3 174.9 L276.5 181.2"/><path d="M271.9 181.6 L276.5 181.2"/><path d="M271.9 181.6 L269.1 172.7"/><path d="M271.9 160.4 L277.9 166.4"/><path d="M265.9 164.5 L269.2 172.4"/><path d="M282.7 145.9 L283.6 168.2"/><path d="M288.7 162.3 L284.7 169.2"/><path d="M292.3 176.5 L288.3 174.9"/><path d="M281.8 197.1 L276.5 181.2"/><path d="M266.6 185.7 L271.9 181.6"/><path d="M258.9 173.1 L269.1 172.7"/><path d="M221.1 127.8 L231.1 128.3"/><path d="M231.1 128.3 L227.5 119.7"/><path d="M250.2 109.3 L239.0 104.7"/><path d="M250.2 109.3 L251.1 106.5"/><path d="M239.0 104.7 L244.3 100.4"/><path d="M251.1 106.5 L247.8 101.8"/><path d="M237.8 104.4 L239.0 104.7"/><path d="M237.2 89.2 L242.7 95.3"/><path d="M228.8 111.6 L236.8 115.0"/><path d="M250.2 109.3 L250.3 110.5"/><path d="M250.3 110.5 L236.8 115.0"/><path d="M231.1 128.3 L232.1 129.8"/><path d="M236.8 115.0 L239.7 121.0"/><path d="M237.2 87.9 L244.6 89.7"/><path d="M253.2 88.3 L244.6 89.7"/><path d="M247.5 97.5 L252.6 94.6"/><path d="M244.6 89.7 L252.6 94.6"/><path d="M305.0 122.4 L292.4 120.2"/><path d="M305.0 116.9 L288.1 105.6"/><path d="M292.4 120.2 L284.7 106.0"/><path d="M288.1 105.6 L284.7 106.0"/><path d="M286.8 125.4 L292.4 120.2"/><path d="M305.0 92.1 L288.1 105.6"/><path d="M281.9 85.0 L281.2 105.9"/><path d="M281.2 105.9 L284.7 106.0"/><path d="M254.6 118.1 L253.3 125.3"/><path d="M254.6 118.1 L276.9 109.1"/><path d="M253.6 125.8 L258.8 126.0"/><path d="M261.5 126.1 L268.3 126.4"/><path d="M276.9 109.1 L278.1 124.7"/><path d="M250.3 110.5 L254.6 118.1"/><path d="M277.2 108.4 L281.2 105.9"/><path d="M268.9 101.8 L269.0 89.7"/><path d="M268.9 101.8 L260.7 99.1"/><path d="M269.0 89.7 L264.3 88.7"/><path d="M273.6 85.0 L269.0 89.7"/><path d="M277.2 108.4 L268.9 101.8"/><path d="M251.1 106.5 L257.1 100.5"/><path d="M326.4 106.0 L346.6 119.7"/><path d="M346.6 119.7 L355.9 106.0"/><path d="M336.8 136.0 L326.2 131.6"/><path d="M336.8 136.0 L327.9 151.5"/><path d="M326.2 131.6 L315.1 140.7"/><path d="M338.1 135.9 L338.9 173.7"/><path d="M338.1 135.9 L336.8 136.0"/><path d="M338.1 135.9 L344.7 134.4"/><path d="M344.7 134.4 L347.9 152.3"/><path d="M375.8 167.4 L357.7 165.4"/><path d="M346.6 119.7 L348.3 131.8"/><path d="M348.3 131.8 L358.0 133.5"/><path d="M366.7 106.0 L358.0 133.5"/><path d="M319.7 107.6 L307.5 113.3"/><path d="M319.7 108.1 L302.3 132.7"/><path d="M307.5 113.3 L300.3 125.8"/><path d="M300.3 125.8 L301.8 132.4"/><path d="M320.4 106.0 L319.7 107.6"/><path d="M285.0 112.4 L307.5 113.3"/><path d="M285.0 113.4 L300.3 125.8"/><path d="M324.1 126.9 L304.3 132.4"/><path d="M324.1 126.9 L321.4 119.6"/><path d="M321.4 119.6 L304.3 132.4"/><path d="M326.2 131.6 L324.1 126.9"/><path d="M303.0 133.2 L304.3 132.4"/><path d="M319.7 108.1 L321.4 119.6"/><path d="M344.7 134.4 L348.3 131.8"/><path d="M369.9 106.0 L372.7 119.2"/><path d="M392.9 124.3 L372.7 119.2"/><path d="M359.3 134.1 L368.5 133.1"/><path d="M359.3 134.1 L361.2 146.7"/><path d="M361.2 146.7 L368.0 149.6"/><path d="M368.0 149.6 L374.1 143.6"/><path d="M368.5 133.1 L374.2 135.3"/><path d="M374.2 135.3 L374.1 143.6"/><path d="M358.0 133.5 L359.3 134.1"/><path d="M372.7 119.2 L368.5 133.1"/><path d="M356.5 160.6 L361.2 146.7"/><path d="M374.0 157.3 L368.0 149.6"/><path d="M377.8 155.5 L374.1 143.6"/><path d="M386.2 134.4 L374.2 135.3"/><path d="M275.0 102.0 L289.5 108.0 L308.6 98.6 L339.5 103.3 L351.4 110.5 L380.0 93.8 L399.0 103.3"/><path d="M125.2 184.3 L130.5 184.1"/><path d="M130.8 200.1 L139.7 190.8"/><path d="M130.5 184.1 L139.7 190.8"/><path d="M130.5 184.1 L141.2 167.9"/><path d="M180.0 207.1 L166.4 200.6"/><path d="M166.4 200.6 L159.1 183.9"/><path d="M162.7 174.5 L159.1 183.9"/><path d="M139.2 235.7 L153.9 228.5"/><path d="M153.9 228.5 L164.3 230.3"/><path d="M172.0 218.9 L163.0 214.9"/><path d="M166.4 200.6 L161.5 206.5"/><path d="M161.5 206.5 L163.0 214.9"/><path d="M153.9 228.5 L155.5 219.3"/><path d="M155.5 219.3 L163.0 214.9"/><path d="M145.3 192.2 L154.0 187.5"/><path d="M145.3 192.2 L143.1 208.3"/><path d="M154.0 187.5 L154.0 208.2"/><path d="M143.1 208.3 L151.0 210.1"/><path d="M151.0 210.1 L154.0 208.2"/><path d="M139.7 190.8 L145.3 192.2"/><path d="M159.1 183.9 L154.0 187.5"/><path d="M138.1 212.0 L143.1 208.3"/><path d="M161.5 206.5 L154.0 208.2"/><path d="M155.5 219.3 L151.0 210.1"/><path d="M302.2 132.7 L298.7 148.5"/><path d="M298.9 154.5 L298.7 148.5"/><path d="M294.1 133.6 L295.7 129.8"/><path d="M294.1 133.6 L298.7 148.5"/><path d="M287.2 128.8 L288.4 135.0"/><path d="M283.8 141.5 L288.4 135.0"/><path d="M294.1 133.6 L288.4 135.0"/><path d="M79.0 104.0 L126.0 110.7"/><path d="M73.6 46.0 L83.0 86.0"/><path d="M92.0 142.0 L110.0 140.0 L120.0 138.0"/></g><circle cx="67.9" cy="72.4" r="16.4" fill="none" stroke="#b3c6f6" stroke-width="1.1"/><circle cx="156.7" cy="32.1" r="11.7" fill="none" stroke="#3a63e4" stroke-width="2"/><circle cx="85.3" cy="122.5" r="2.4" fill="none" stroke="#3a63e4" stroke-width="1.7"/><circle cx="139.3" cy="190.5" r="2.4" fill="none" stroke="#3a63e4" stroke-width="1.7"/><circle cx="345.9" cy="122.9" r="6.1" fill="none" stroke="#4a6fe6" stroke-width="1.5"/><circle cx="330.5" cy="141.2" r="2.6" fill="none" stroke="#3a63e4" stroke-width="1.6"/><circle cx="348.1" cy="142.2" r="8.7" fill="none" stroke="#4a6fe6" stroke-width="1.5"/><circle cx="255.6" cy="170.8" r="2.5" fill="none" stroke="#4a6fe6" stroke-width="1.5"/><circle cx="254.8" cy="183.4" r="4.4" fill="none" stroke="#3a5ed8" stroke-width="2"/><circle cx="271.5" cy="179.3" r="7.4" fill="none" stroke="#4a6fe6" stroke-width="1.5"/></svg>
<div class="r" style="left:263px;top:443px;width:1268px;height:417px;background:#fff;border:1px solid #e9eaec;border-radius:6px"></div>
<div class="t" style="left:282.00px;top:457.00px;font-size:14.5px;color:#1c1f26;font-weight:400;letter-spacing:0.486px;">API Requests</div>
<div class="t" style="left:299.00px;top:482.00px;font-size:14px;color:#6b7078;font-weight:400;letter-spacing:0.298px;">Live Request</div>
<div class="t" style="left:425.60px;top:482.00px;font-size:14px;color:#22252d;font-weight:400;letter-spacing:0.436px;">Top API Endpoints</div>
<div class="r" style="left:280px;top:504px;width:1066px;height:1px;background:#e3e5e8"></div>
<div class="r" style="left:425px;top:502px;width:122px;height:3px;background:#1c1f26;border-radius:2px"></div>
<div class="r" style="left:280px;top:522px;width:44px;height:29px;background:#fff;border:1px solid #dfe2e5;border-radius:5px"></div>
<svg class="s" style="left:295px;top:529px;" width="14" height="14" viewBox="0 0 14 14"><circle cx="5.8" cy="5.8" r="4.6" fill="none" stroke="#2b2f36" stroke-width="1.5"/><path d="M9.2 9.2 L12.8 12.8" stroke="#2b2f36" stroke-width="1.6" stroke-linecap="round"/></svg>
<div class="r" style="left:280px;top:560px;width:317px;height:30px;background:#f3f3f4;border-bottom:1px solid #e3e5e8;border-radius:4px 4px 0 0"></div>
<div class="t" style="left:296.40px;top:569.00px;font-size:10.5px;color:#62686f;font-weight:700;letter-spacing:0.355px;">API ENPOINTS</div>
<div class="r" style="left:483px;top:566px;width:1px;height:18px;background:#dcdfe2"></div>
<div class="t" style="left:495.40px;top:569.00px;font-size:10.5px;color:#62686f;font-weight:700;letter-spacing:0.555px;">CALLS/MIN</div>
<div class="r" style="left:280px;top:630px;width:317px;height:1px;background:#e6e8ea"></div>
<svg class="s" style="left:294.8px;top:603.5px;" width="14.0" height="14.0" viewBox="0 0 14.0 14.0"><g transform="scale(1.0)"><path d="M6.9 2.3 A5 5 0 1 0 11.8 7.2" fill="none" stroke="#2a3f9e" stroke-width="1.7" stroke-linecap="round"/><path d="M7.8 6.2 L12.6 1.4" fill="none" stroke="#2a3f9e" stroke-width="1.7" stroke-linecap="round"/><path d="M9.4 1 H13 V4.6 Z" fill="#2a3f9e" stroke="#2a3f9e" stroke-width="1.2" stroke-linejoin="round"/></g></svg>
<div class="t" style="left:319.00px;top:603.00px;font-size:14px;color:#2f3238;font-weight:400;letter-spacing:0.332px;">POST /checkout</div>
<div class="t" style="left:510.00px;top:604.00px;font-size:13.5px;color:#2a2e35;font-weight:400;letter-spacing:0.738px;">230</div>
<div class="r" style="left:280px;top:671px;width:317px;height:1px;background:#e6e8ea"></div>
<svg class="s" style="left:294.8px;top:644.5px;" width="14.0" height="14.0" viewBox="0 0 14.0 14.0"><g transform="scale(1.0)"><path d="M6.6 1.6 A5.5 5.5 0 1 0 12.9 7.2" fill="none" stroke="#f0a24e" stroke-width="1.7" stroke-linecap="round"/><path d="M12.9 1.4 L6.4 7.7 M5.9 4.2 V8.1 H9.7" fill="none" stroke="#f0a24e" stroke-width="1.7" stroke-linecap="round" stroke-linejoin="round"/></g></svg>
<div class="t" style="left:319.00px;top:644.00px;font-size:14px;color:#2f3238;font-weight:400;letter-spacing:0.383px;">POST /logout</div>
<div class="t" style="left:510.00px;top:645.00px;font-size:13.5px;color:#2a2e35;font-weight:400;letter-spacing:-0.762px;">221</div>
<div class="r" style="left:280px;top:672px;width:317px;height:40px;background:#eef2fb"></div>
<div class="r" style="left:280px;top:712px;width:317px;height:1px;background:#e6e8ea"></div>
<svg class="s" style="left:294.8px;top:685.5px;" width="14.0" height="14.0" viewBox="0 0 14.0 14.0"><g transform="scale(1.0)"><path d="M6.6 1.6 A5.5 5.5 0 1 0 12.9 7.2" fill="none" stroke="#f0a24e" stroke-width="1.7" stroke-linecap="round"/><path d="M12.9 1.4 L6.4 7.7 M5.9 4.2 V8.1 H9.7" fill="none" stroke="#f0a24e" stroke-width="1.7" stroke-linecap="round" stroke-linejoin="round"/></g></svg>
<div class="t" style="left:319.00px;top:685.00px;font-size:14px;color:#2f3238;font-weight:400;letter-spacing:0.178px;">POST /login</div>
<div class="t" style="left:510.00px;top:686.00px;font-size:13.5px;color:#2a2e35;font-weight:400;letter-spacing:-0.762px;">221</div>
<div class="r" style="left:280px;top:753px;width:317px;height:1px;background:#e6e8ea"></div>
<svg class="s" style="left:294.8px;top:726.5px;" width="14.0" height="14.0" viewBox="0 0 14.0 14.0"><g transform="scale(1.0)"><path d="M6.6 1.6 A5.5 5.5 0 1 0 12.9 7.2" fill="none" stroke="#f0a24e" stroke-width="1.7" stroke-linecap="round"/><path d="M12.9 1.4 L6.4 7.7 M5.9 4.2 V8.1 H9.7" fill="none" stroke="#f0a24e" stroke-width="1.7" stroke-linecap="round" stroke-linejoin="round"/></g></svg>
<div class="t" style="left:319.00px;top:726.00px;font-size:14px;color:#2f3238;font-weight:400;letter-spacing:0.573px;">GET /cart/items</div>
<div class="t" style="left:510.00px;top:727.00px;font-size:13.5px;color:#2a2e35;font-weight:400;letter-spacing:-0.762px;">221</div>
<div class="r" style="left:280px;top:794px;width:317px;height:1px;background:#e6e8ea"></div>
<svg class="s" style="left:294.8px;top:767.5px;" width="14.0" height="14.0" viewBox="0 0 14.0 14.0"><g transform="scale(1.0)"><path d="M6.6 1.6 A5.5 5.5 0 1 0 12.9 7.2" fill="none" stroke="#f0a24e" stroke-width="1.7" stroke-linecap="round"/><path d="M12.9 1.4 L6.4 7.7 M5.9 4.2 V8.1 H9.7" fill="none" stroke="#f0a24e" stroke-width="1.7" stroke-linecap="round" stroke-linejoin="round"/></g></svg>
<div class="t" style="left:319.00px;top:767.00px;font-size:14px;color:#2f3238;font-weight:400;letter-spacing:0.339px;">POST /updateCart</div>
<div class="t" style="left:510.00px;top:768.00px;font-size:13.5px;color:#2a2e35;font-weight:400;letter-spacing:-0.762px;">221</div>
<div class="r" style="left:280px;top:835px;width:317px;height:1px;background:#e6e8ea"></div>
<svg class="s" style="left:294.8px;top:808.5px;" width="14.0" height="14.0" viewBox="0 0 14.0 14.0"><g transform="scale(1.0)"><path d="M6.9 2.3 A5 5 0 1 0 11.8 7.2" fill="none" stroke="#2a3f9e" stroke-width="1.7" stroke-linecap="round"/><path d="M7.8 6.2 L12.6 1.4" fill="none" stroke="#2a3f9e" stroke-width="1.7" stroke-linecap="round"/><path d="M9.4 1 H13 V4.6 Z" fill="#2a3f9e" stroke="#2a3f9e" stroke-width="1.2" stroke-linejoin="round"/></g></svg>
<div class="t" style="left:319.00px;top:808.00px;font-size:14px;color:#2f3238;font-weight:400;letter-spacing:0.356px;">GET /returnOrder</div>
<div class="t" style="left:510.00px;top:809.00px;font-size:13.5px;color:#2a2e35;font-weight:400;letter-spacing:-0.762px;">221</div>
<div class="r" style="left:608px;top:517px;width:1px;height:323px;background:#e6e8ea"></div>
<svg class="s" style="left:627.45px;top:528.25px;" width="16.099999999999998" height="16.099999999999998" viewBox="0 0 16.099999999999998 16.099999999999998"><g transform="scale(1.15)"><path d="M6.6 1.6 A5.5 5.5 0 1 0 12.9 7.2" fill="none" stroke="#f0a24e" stroke-width="1.7" stroke-linecap="round"/><path d="M12.9 1.4 L6.4 7.7 M5.9 4.2 V8.1 H9.7" fill="none" stroke="#f0a24e" stroke-width="1.7" stroke-linecap="round" stroke-linejoin="round"/></g></svg>
<div class="t" style="left:653.20px;top:530.00px;font-size:14px;color:#2a2d33;font-weight:700;letter-spacing:0.145px;">POST /login/{user-id}</div>
<svg class="s" style="left:626px;top:557px;" width="17" height="13" viewBox="0 0 17 13"><path d="M4.5 11.5 H12.5 Q15.5 11.5 15.5 8.6 Q15.5 6 12.8 5.8 Q12 2 8.4 2 Q5.2 2 4.5 5.2 Q1.5 5.6 1.5 8.5 Q1.5 11.5 4.5 11.5 Z" fill="none" stroke="#868c94" stroke-width="1.1"/></svg>
<div class="t" style="left:645.50px;top:558.00px;font-size:12.5px;color:#3a3f47;font-weight:400;letter-spacing:0.138px;">ingress-nginx</div>
<svg class="s" style="left:739px;top:556px;" width="14" height="14" viewBox="0 0 14 14"><rect x="1" y="1.5" width="12.5" height="11" rx="1" fill="none" stroke="#6a7078" stroke-width="1.1"/><path d="M3.5 5 L5.5 7 L3.5 9 M6.5 9.5 H10" fill="none" stroke="#6a7078" stroke-width="1.1"/></svg>
<div class="t" style="left:757.00px;top:558.00px;font-size:12.5px;color:#3a3f47;font-weight:400;letter-spacing:-0.570px;">1,600</div>
<svg class="s" style="left:805px;top:558px;" width="13" height="11" viewBox="0 0 13 11"><path d="M3.5 2.5 L1 5.5 L3.5 8.5 M9.5 2.5 L12 5.5 L9.5 8.5 M7.6 1.5 L5.4 9.5" fill="none" stroke="#6a7078" stroke-width="1.1"/></svg>
<div class="t" style="left:823.00px;top:558.00px;font-size:12.5px;color:#3a3f47;font-weight:400;letter-spacing:-0.236px;">GraphQL</div>
<div class="r" style="left:1224px;top:524px;width:241px;height:1px;background:#eceef0"></div>
<div class="r" style="left:1224px;top:543px;width:241px;height:1px;background:#eceef0"></div>
<div class="r" style="left:1224px;top:560px;width:241px;height:1px;background:#eceef0"></div>
<svg class="s" style="left:1220px;top:515px;" width="250" height="50" viewBox="0 0 250 50"><defs><linearGradient id="sg" x1="0" y1="0" x2="0" y2="1"><stop offset="0" stop-color="#dfe1e4" stop-opacity=".7"/><stop offset="1" stop-color="#fff" stop-opacity="0"/></linearGradient></defs><path d="M18.4 30.6 L52.4 12.3 L82.2 39.3 L114.9 34.8 L147.1 45.7 L180.8 15.5 L211.3 25.3 L244.6 19.4 L244.6 46 L18.4 46 Z" fill="url(#sg)"/><path d="M18.4 30.6 L52.4 12.3 L82.2 39.3 L114.9 34.8 L147.1 45.7 L180.8 15.5 L211.3 25.3 L244.6 19.4" fill="none" stroke="#5f656d" stroke-width="1.7" stroke-linejoin="round"/></svg>
<div class="t" style="left:1236.70px;top:569.00px;font-size:10.5px;color:#979ca3;font-weight:400;letter-spacing:-0.222px;">10am</div>
<div class="t" style="left:1337.30px;top:569.00px;font-size:10.5px;color:#979ca3;font-weight:400;letter-spacing:0.287px;">7pm</div>
<div class="t" style="left:1437.60px;top:569.00px;font-size:10.5px;color:#979ca3;font-weight:400;letter-spacing:-0.089px;">12pm</div>
<svg class="s" style="left:1490px;top:515px;" width="20" height="19" viewBox="0 0 20 19"><path d="M8 3.5 H2.5 V16.5 H15.5 V11" fill="none" stroke="#5f656d" stroke-width="1.8"/><path d="M9 10 L16.5 2.5 M11 2 H17 V8" fill="none" stroke="#5f656d" stroke-width="1.8"/></svg>
<div class="r" style="left:624px;top:593px;width:894px;height:30px;background:#f3f3f4;border-bottom:1px solid #e3e5e8;border-radius:4px 4px 0 0"></div>
<div class="t" style="left:641.00px;top:603.00px;font-size:10.5px;color:#62686f;font-weight:700;letter-spacing:0.365px;">START TIME</div>
<div class="t" style="left:912.20px;top:603.00px;font-size:10.5px;color:#62686f;font-weight:700;letter-spacing:0.233px;">IP ADDRESS</div>
<div class="t" style="left:1086.60px;top:603.00px;font-size:10.5px;color:#62686f;font-weight:700;letter-spacing:0.210px;">URL</div>
<div class="t" style="left:1371.70px;top:603.00px;font-size:10.5px;color:#62686f;font-weight:700;letter-spacing:0.311px;">STATUS</div>
<div class="r" style="left:900px;top:600px;width:1px;height:17px;background:#dcdfe2"></div>
<div class="r" style="left:1074px;top:600px;width:1px;height:17px;background:#dcdfe2"></div>
<div class="r" style="left:1360px;top:600px;width:1px;height:17px;background:#dcdfe2"></div>
<svg class="s" style="left:638px;top:638.2px;" width="10" height="12" viewBox="0 0 10 12"><path d="M3 1.5 L7.5 6 L3 10.5" fill="none" stroke="#3a3f47" stroke-width="1.5"/></svg>
<div class="t" style="left:657.70px;top:638.00px;font-size:13.5px;color:#3a3d44;font-weight:400;letter-spacing:-0.160px;">2021-11-15 11:14:49 PM</div>
<div class="t" style="left:906.00px;top:638.00px;font-size:13.5px;color:#3a3d44;font-weight:400;letter-spacing:-0.046px;">10.44.4.37</div>
<div class="t" style="left:1086.60px;top:637.00px;font-size:14px;color:#3a3d44;font-weight:400;letter-spacing:0.459px;">traceable-shop.dev.ai</div>
<div class="r" style="left:1378px;top:634px;width:65px;height:20px;background:#c9f1d9;border-radius:2px"></div>
<div class="t" style="left:1384.60px;top:640.00px;font-size:11px;color:#1f3a2b;font-weight:400;letter-spacing:0.159px;font-family:'Liberation Mono', monospace;">200 OK</div>
<div class="r" style="left:620px;top:664px;width:889px;height:1px;background:#e6e8ea"></div>
<svg class="s" style="left:638px;top:679.2px;" width="10" height="12" viewBox="0 0 10 12"><path d="M3 1.5 L7.5 6 L3 10.5" fill="none" stroke="#3a3f47" stroke-width="1.5"/></svg>
<div class="t" style="left:657.70px;top:679.00px;font-size:13.5px;color:#3a3d44;font-weight:400;letter-spacing:-0.160px;">2021-11-15 11:14:49 PM</div>
<div class="t" style="left:906.00px;top:679.00px;font-size:13.5px;color:#3a3d44;font-weight:400;letter-spacing:-0.046px;">10.44.4.37</div>
<div class="t" style="left:1086.60px;top:678.00px;font-size:14px;color:#3a3d44;font-weight:400;letter-spacing:0.459px;">traceable-shop.dev.ai</div>
<div class="r" style="left:1378px;top:675px;width:65px;height:20px;background:#c9f1d9;border-radius:2px"></div>
<div class="t" style="left:1384.60px;top:682.00px;font-size:11px;color:#1f3a2b;font-weight:400;letter-spacing:0.159px;font-family:'Liberation Mono', monospace;">200 OK</div>
<div class="r" style="left:620px;top:705px;width:889px;height:1px;background:#e6e8ea"></div>
<svg class="s" style="left:638px;top:720.6px;" width="10" height="12" viewBox="0 0 10 12"><path d="M3 1.5 L7.5 6 L3 10.5" fill="none" stroke="#3a3f47" stroke-width="1.5"/></svg>
<div class="t" style="left:657.70px;top:721.00px;font-size:13.5px;color:#3a3d44;font-weight:400;letter-spacing:-0.160px;">2021-11-15 11:14:49 PM</div>
<div class="t" style="left:906.00px;top:721.00px;font-size:13.5px;color:#3a3d44;font-weight:400;letter-spacing:-0.046px;">10.44.4.37</div>
<div class="t" style="left:1086.60px;top:720.00px;font-size:14px;color:#3a3d44;font-weight:400;letter-spacing:0.459px;">traceable-shop.dev.ai</div>
<div class="r" style="left:1378px;top:717px;width:65px;height:20px;background:#c9f1d9;border-radius:2px"></div>
<div class="t" style="left:1384.60px;top:723.00px;font-size:11px;color:#1f3a2b;font-weight:400;letter-spacing:0.159px;font-family:'Liberation Mono', monospace;">200 OK</div>
<div class="r" style="left:620px;top:746px;width:889px;height:1px;background:#e6e8ea"></div>
<svg class="s" style="left:638px;top:761.5px;" width="10" height="12" viewBox="0 0 10 12"><path d="M3 1.5 L7.5 6 L3 10.5" fill="none" stroke="#3a3f47" stroke-width="1.5"/></svg>
<div class="t" style="left:657.70px;top:761.00px;font-size:13.5px;color:#3a3d44;font-weight:400;letter-spacing:-0.160px;">2021-11-15 11:14:49 PM</div>
<div class="t" style="left:906.00px;top:761.00px;font-size:13.5px;color:#3a3d44;font-weight:400;letter-spacing:-0.046px;">10.44.4.37</div>
<div class="t" style="left:1086.60px;top:760.00px;font-size:14px;color:#3a3d44;font-weight:400;letter-spacing:0.459px;">traceable-shop.dev.ai</div>
<div class="r" style="left:1378px;top:758px;width:65px;height:20px;background:#c9f1d9;border-radius:2px"></div>
<div class="t" style="left:1384.60px;top:764.00px;font-size:11px;color:#1f3a2b;font-weight:400;letter-spacing:0.159px;font-family:'Liberation Mono', monospace;">200 OK</div>
<div class="r" style="left:620px;top:787px;width:889px;height:1px;background:#e6e8ea"></div>
<div class="r" style="left:609px;top:792px;width:931px;height:1px;background:#e6e8ea"></div>
<div class="t" style="left:647.00px;top:811.00px;font-size:13px;color:#70767e;font-weight:400;letter-spacing:0.962px;">1-50 of 320</div>
<div class="r" style="left:761px;top:803px;width:75px;height:29px;background:#fff;border:1px solid #e1e3e6;border-radius:5px"></div>
<div class="r" style="left:798px;top:803px;width:1px;height:29px;background:#e1e3e6"></div>
<svg class="s" style="left:771px;top:810px;" width="16" height="14" viewBox="0 0 16 14"><path d="M15 7 H2 M7.5 1.5 L2 7 L7.5 12.5" fill="none" stroke="#1e2228" stroke-width="1.8"/></svg>
<svg class="s" style="left:809px;top:810px;" width="16" height="14" viewBox="0 0 16 14"><path d="M1 7 H14 M8.5 1.5 L14 7 L8.5 12.5" fill="none" stroke="#1e2228" stroke-width="1.8"/></svg>
<div class="t" style="left:865.60px;top:811.00px;font-size:13px;color:#70767e;font-weight:400;letter-spacing:0.842px;">Rows per page:</div>
<div class="r" style="left:1013px;top:803px;width:90px;height:29px;background:#f3f4f5;border:1px solid #e3e5e8;border-radius:5px"></div>
<div class="t" style="left:1028.00px;top:812.00px;font-size:13.5px;color:#2a2e35;font-weight:400;letter-spacing:0.983px;">20</div>
<svg class="s" style="left:1071px;top:812px;" width="15" height="10" viewBox="0 0 15 10"><path d="M2 2.5 L7.5 7.5 L13 2.5" fill="none" stroke="#1e2228" stroke-width="1.8"/></svg>
<div class="r" style="left:1519px;top:383px;width:41px;height:192px;background:#fff;border-radius:8px 0 0 8px;box-shadow:-1px 0 5px rgba(0,0,0,.09)"></div>
<div class="r" style="left:1528px;top:396px;width:32px;height:25px;background:#e7edfc;border-radius:3px"></div>
<div class="t" style="left:1537px;top:408px;transform:translate(-50%,-50%) rotate(-90deg);font-size:12.5px;font-weight:400;color:#1d2027">49</div>
<div class="t" style="left:1540px;top:484px;transform:translate(-50%,-50%) rotate(-90deg);font-size:11px;font-weight:400;color:#3f444c;letter-spacing:.9px">RECENT CHANGES</div>
<svg class="s" style="left:1532px;top:551px;" width="10" height="16" viewBox="0 0 10 16"><path d="M8 2 L2.5 8 L8 14" fill="none" stroke="#1e2228" stroke-width="1.8"/></svg>
<svg class="s" style="left:0px;top:0px;pointer-events:none" width="1540" height="840" viewBox="0 0 1540 840"><path fill-rule="evenodd" fill="#3e6a40" d="M0 0 H1540 V840 H0 Z M18 0 H1524 A17 17 0 0 1 1541 17 V823 A17 17 0 0 1 1524 840 H18 A17 17 0 0 1 1 823 V17 A17 17 0 0 1 18 0 Z"/></svg>
</div></body></html>
